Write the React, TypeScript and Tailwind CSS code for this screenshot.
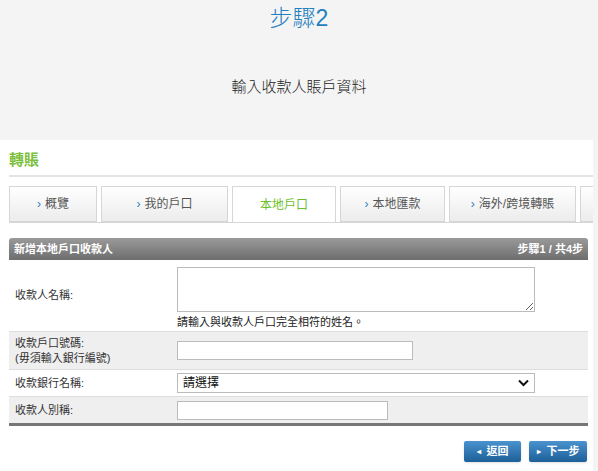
export default function App() {
  const f = { fontFamily: '"Liberation Sans", "Noto Sans CJK TC", sans-serif' };
  const tab = "h-[36px] flex items-center justify-center border border-[#d6d6d6] bg-gradient-to-b from-white to-[#ececec] text-[12px] text-[#555] shrink-0";
  return (
    <div style={f} className="w-[598px] h-[471px] bg-[#f4f4f4] overflow-hidden">
      <div className="h-[140px] flex flex-col items-center">
        <div className="mt-[2px] text-[23px] font-light text-[#1f7fc1] leading-[32px]">步驟2</div>
        <div className="mt-[42px] text-[15px] font-light text-[#222]">輸入收款人賬戶資料</div>
      </div>
      <div className="w-[593px] h-[331px] bg-white pl-[9px] pt-[10px]">
        <div className="text-[15px] font-bold text-[#7cbf3c] h-[27px] border-b-2 border-[#e4e4e4] leading-[20px]">轉賬</div>
        <div className="flex gap-[4px] mt-[9px] h-[37px] border-b border-[#d6d6d6] overflow-hidden">
          <div className={tab + " w-[88px]"}><span className="text-[#2a7fc0] mr-1">›</span>概覽</div>
          <div className={tab + " w-[127px]"}><span className="text-[#2a7fc0] mr-1">›</span>我的戶口</div>
          <div className="h-[37px] w-[104px] flex items-center justify-center border border-b-0 border-[#d6d6d6] bg-white text-[12px] text-[#6cbf2c] shrink-0">本地戶口</div>
          <div className={tab + " w-[105px]"}><span className="text-[#2a7fc0] mr-1">›</span>本地匯款</div>
          <div className={tab + " w-[127px]"}><span className="text-[#2a7fc0] mr-1">›</span>海外/跨境轉賬</div>
          <div className={tab + " w-[40px]"}></div>
        </div>
        <div className="mt-[15px] w-[579px]">
          <div className="h-[22px] rounded-t-[3px] bg-gradient-to-b from-[#9a9a9a] to-[#6e6e6e] flex items-center justify-between px-[5px] text-white text-[11px] font-bold">
            <span>新增本地戶口收款人</span><span>步驟1 / 共4步</span>
          </div>
          <div className="flex h-[71px] bg-white text-[11px] text-[#333]">
            <div className="w-[168px] pl-[6px] flex items-center">收款人名稱:</div>
            <div className="pt-[7px]">
              <textarea className="block w-[358px] h-[45px] border border-[#bbb] resize-y" />
              <div className="mt-[3px] text-[11px] leading-[14px] text-[#222]">請輸入與收款人戶口完全相符的姓名。</div>
            </div>
          </div>
          <div className="flex h-[38px] bg-[#efefef] border-t border-[#ddd] text-[11px] text-[#333] items-center">
            <div className="w-[168px] pl-[6px] leading-[15px]">收款戶口號碼:<br />(毋須輸入銀行編號)</div>
            <input className="w-[236px] h-[19px] bg-white border border-[#bbb]" />
          </div>
          <div className="flex h-[27px] bg-white border-t border-[#ddd] text-[11px] text-[#333] items-center">
            <div className="w-[168px] pl-[6px]">收款銀行名稱:</div>
            <div className="w-[358px] h-[20px] border border-[#bbb] flex items-center justify-between px-[5px] text-[12px] text-[#111]">
              <span>請選擇</span>
              <svg width="11" height="8" viewBox="0 0 11 8"><path d="M1 1.5l4.5 4.5L10 1.5" stroke="#111" strokeWidth="2" fill="none" /></svg>
            </div>
          </div>
          <div className="flex h-[30px] bg-[#efefef] border-t border-[#ddd] border-b-[3px] border-b-[#777] text-[11px] text-[#333] items-center">
            <div className="w-[168px] pl-[6px]">收款人別稱:</div>
            <input className="w-[211px] h-[19px] bg-white border border-[#bbb]" />
          </div>
          <div className="flex justify-end gap-[8px] mt-[15px] pr-[1px]">
            <div className="w-[57px] h-[21px] rounded-[2px] bg-gradient-to-b from-[#4a93cf] to-[#1c5f99] text-white text-[11px] font-bold flex items-center justify-center gap-[6px] shadow"><span className="text-[8px]">◂</span>返回</div>
            <div className="w-[58px] h-[21px] rounded-[2px] bg-gradient-to-b from-[#4a93cf] to-[#1c5f99] text-white text-[11px] font-bold flex items-center justify-center gap-[6px] shadow"><span className="text-[8px]">▸</span>下一步</div>
          </div>
        </div>
      </div>
    </div>
  );
}
